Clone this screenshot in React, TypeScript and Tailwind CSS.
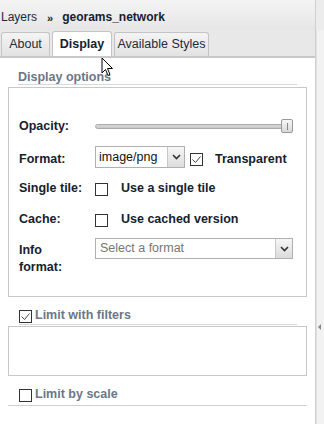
import React from "react";

const font = { fontFamily: '"Liberation Sans", Arial, sans-serif' };

function Check({ checked }: { checked?: boolean }) {
  return (
    <div className="w-[13px] h-[13px] border border-[#333] bg-white flex items-center justify-center shrink-0">
      {checked && (
        <svg width="11" height="11" viewBox="0 0 11 11">
          <path d="M1.5 5.5 L4.5 8.5 L9.5 2.5" fill="none" stroke="#444" strokeWidth="1" />
        </svg>
      )}
    </div>
  );
}

function Arrow() {
  return (
    <svg width="9" height="6" viewBox="0 0 9 6">
      <path d="M1 1 L4.5 4.5 L8 1" fill="none" stroke="#333" strokeWidth="1.6" />
    </svg>
  );
}

export default function App() {
  return (
    <div className="relative w-[324px] h-[424px] bg-white flex overflow-hidden text-[#15212f]" style={font}>
      <div className="w-[316px] h-full flex flex-col border-r border-[#d0d0d0]">
        {/* header */}
        <div className="h-[30px] shrink-0 bg-gradient-to-b from-[#f4f4f4] to-[#e6e6e6] flex items-end pb-[4px] pl-[1px] text-[12px]">
          <span className="text-[#1a2a3a]">Layers</span>
          <span className="ml-[10px] mr-[9px] font-bold text-[11px]">»</span>
          <span className="font-bold">georams_network</span>
        </div>
        {/* tabs */}
        <div className="h-[28px] shrink-0 bg-[#e8e8e8] flex items-end gap-[2px] pl-[1px] border-b-[2px] border-[#c8c8c8] text-[12.5px]">
          <div className="w-[49px] h-[24px] border border-b-0 border-[#c4c4c4] rounded-t-[3px] bg-gradient-to-b from-[#f4f4f4] to-[#e2e2e2] flex items-center justify-center text-[#1e2b3a]">About</div>
          <div className="w-[60px] h-[25px] border border-b-0 border-[#c4c4c4] rounded-t-[3px] bg-white flex items-center justify-center font-bold">Display</div>
          <div className="w-[95px] h-[24px] border border-b-0 border-[#c4c4c4] rounded-t-[3px] bg-gradient-to-b from-[#f4f4f4] to-[#e2e2e2] flex items-center justify-center text-[#1e2b3a]">Available Styles</div>
        </div>
        {/* content */}
        <div className="flex-1 flex flex-col px-[8px] pt-[12px] text-[12.5px]">
          <div className="ml-[10px] mr-[10px] border-b border-[#d8d8d8] h-[15px] flex items-end">
            <span className="font-bold text-[#6b7788] leading-none pb-[1px]">Display options</span>
          </div>
          <div className="mt-[2px] h-[210px] border border-[#c8c8c8] flex flex-col pl-[10px] pr-[13px] pt-[30px] font-bold">
            <div className="flex items-center h-[16px]">
              <span className="w-[76px]">Opacity:</span>
              <div className="relative flex-1 h-[14px] flex items-center">
                <div className="w-full h-[5px] rounded-full border border-[#aaa] bg-gradient-to-b from-[#d8d8d8] to-[#c8c8c8]" />
                <div className="absolute right-0 top-0 w-[12px] h-[14px] rounded-[2px] border border-[#999] bg-gradient-to-b from-[#f8f8f8] to-[#d8d8d8] flex items-center justify-center">
                  <div className="w-[1px] h-[7px] bg-[#888]" />
                </div>
              </div>
            </div>
            <div className="flex items-start mt-[12px] h-[22px]">
              <span className="w-[76px] pt-[4px]">Format:</span>
              <div className="w-[90px] h-[22px] border border-[#b0b0b0] flex font-normal">
                <span className="flex-1 pl-[3px] flex items-center text-[#111]">image/png</span>
                <div className="w-[17px] border-l border-[#c8c8c8] bg-gradient-to-b from-[#f6f6f6] to-[#dcdcdc] flex items-center justify-center"><Arrow /></div>
              </div>
              <div className="ml-[5px] mt-[7px]"><Check checked /></div>
              <span className="ml-[12px] pt-[4px]">Transparent</span>
            </div>
            <div className="flex items-start mt-[7px] h-[26px]">
              <span className="w-[76px] pt-[4px]">Single tile:</span>
              <div className="mt-[8px]"><Check /></div>
              <span className="ml-[13px] pt-[4px]">Use a single tile</span>
            </div>
            <div className="flex items-start mt-[5px] h-[26px]">
              <span className="w-[76px] pt-[4px]">Cache:</span>
              <div className="mt-[8px]"><Check /></div>
              <span className="ml-[13px] pt-[4px]">Use cached version</span>
            </div>
            <div className="flex items-start mt-[6px]">
              <span className="w-[76px] pt-[4px] leading-[17px]">Info<br />format:</span>
              <div className="flex-1 h-[21px] border border-[#b0b0b0] flex font-normal">
                <span className="flex-1 pl-[4px] flex items-center text-[#777]">Select a format</span>
                <div className="w-[17px] border-l border-[#c8c8c8] bg-gradient-to-b from-[#f6f6f6] to-[#dcdcdc] flex items-center justify-center"><Arrow /></div>
              </div>
            </div>
          </div>
          <div className="mt-[13px] ml-[11px] mr-[10px] border-b border-[#d8d8d8] h-[15px] flex items-end gap-[3px]">
            <div className="mb-[1px]"><Check checked /></div>
            <span className="font-bold text-[#6b7788] leading-none pb-[3px]">Limit with filters</span>
          </div>
          <div className="mt-[1px] h-[50px] border border-[#c8c8c8]" />
          <div className="mt-[12px] pl-[11px] border-b border-[#d0d0d0] h-[18px] flex items-end gap-[3px]">
            <div className="mb-[3px]"><Check /></div>
            <span className="font-bold text-[#6b7788] leading-none pb-[5px]">Limit by scale</span>
          </div>
        </div>
      </div>
      <div className="w-[8px] h-full flex flex-col">
        <div className="h-[30px] bg-[#ececec]" />
        <div className="flex-1 bg-[#f2f2f2] border-l border-[#e0e0e0] flex flex-col items-start pt-[292px]">
          <svg width="6" height="10" viewBox="0 0 6 10"><path d="M4 2 L1 5 L4 8 Z" fill="#888" /></svg>
        </div>
      </div>
      {/* mouse cursor */}
      <svg className="absolute left-[101px] top-[57px]" width="13" height="20" viewBox="0 0 13 20">
        <path d="M1 1 L1 16 L4.5 12.5 L7 18.5 L9 17.5 L6.5 11.5 L11.5 11.5 Z" fill="#fff" stroke="#000" strokeWidth="1" strokeLinejoin="round" />
      </svg>
    </div>
  );
}
